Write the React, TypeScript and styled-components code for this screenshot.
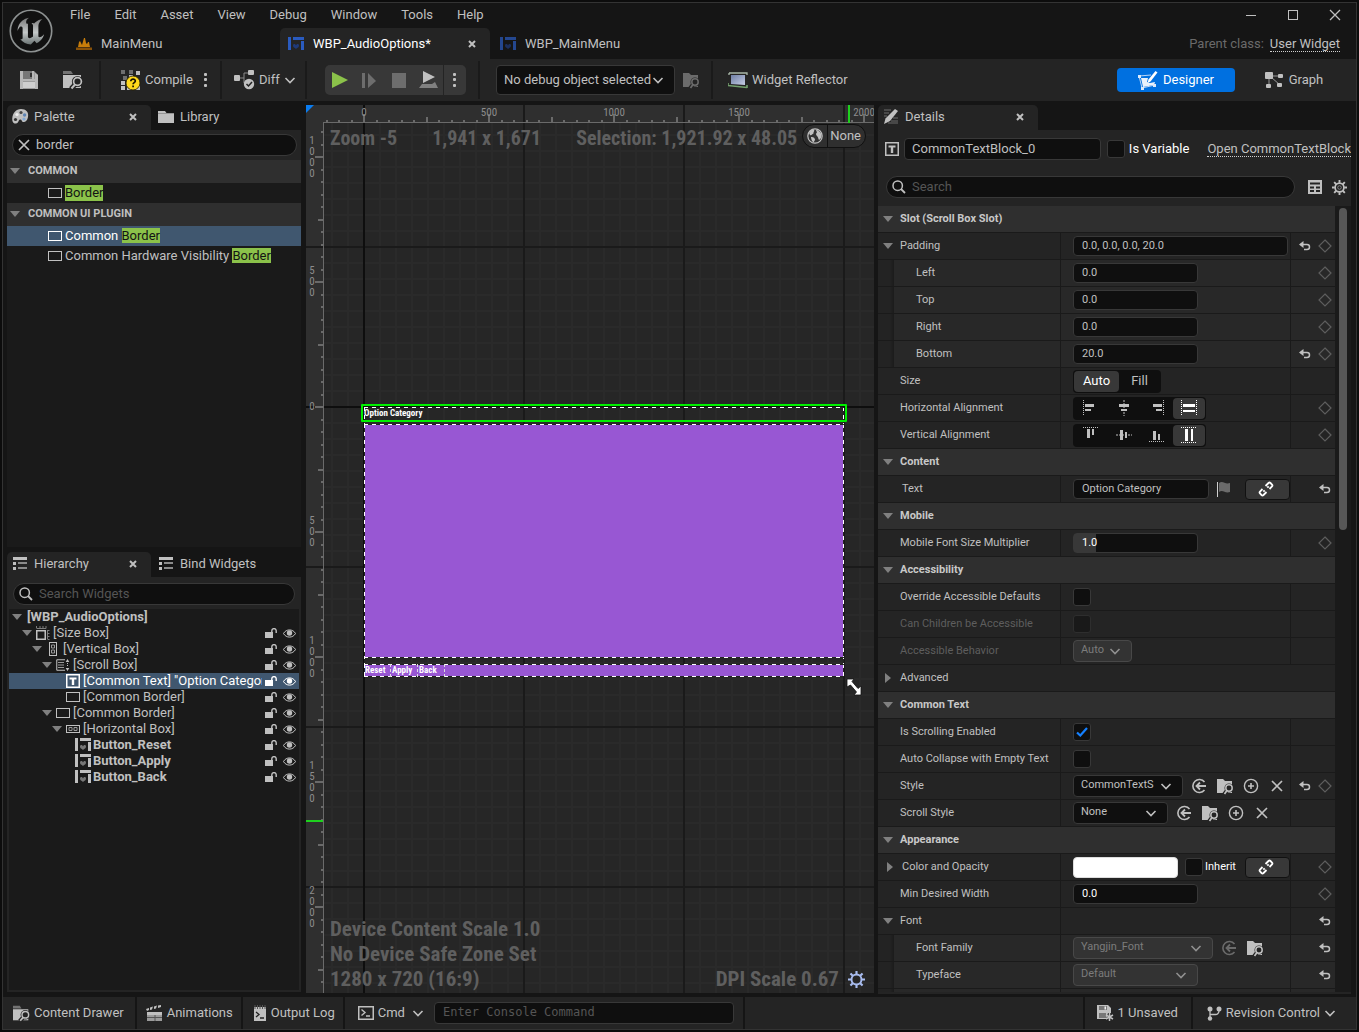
import React from "react";
import styled, { createGlobalStyle, css } from "styled-components";

const c = {
  frame: "#0c0c0c",
  recess: "#151515",
  panel: "#242424",
  well: "#1a1a1a",
  header: "#2f2f2f",
  input: "#0f0f0f",
  line: "#383838",
  text: "#c0c0c0",
  select: "#40576f",
  blue: "#0070e0",
  green: "#8bc24a",
};

const sans = `Roboto, "Noto Sans", sans-serif`;
const narrow = `"Roboto Condensed", "Liberation Sans Narrow", Roboto, sans-serif`;

const Global = createGlobalStyle`
  *, *::before, *::after { box-sizing: border-box; }
  body { margin: 0; background: ${c.frame}; color: ${c.text}; font: 13px/16px ${sans}; }
  button, input, select { font: inherit; color: inherit; margin: 0; padding: 0; border: 0; background: none; outline: none; }
  button { display: inline-flex; align-items: center; justify-content: center; white-space: nowrap; }
  svg { display: block; flex: none; }
  a { color: inherit; text-decoration: none; }
  ul { list-style: none; margin: 0; padding: 0; }
`;

/* ---------- icons ---------- */

type SvgProps = { w?: number; h?: number; box?: string; children: React.ReactNode };
const Svg = ({ w = 16, h, box, children }: SvgProps) => (
  <svg width={w} height={h ?? w} viewBox={box ?? `0 0 ${w} ${h ?? w}`} fill="currentColor" aria-hidden="true">
    {children}
  </svg>
);

const Chevron = ({ color = "currentColor" }: { color?: string }) => (
  <Svg w={12} h={10}>
    <path d="M1.5 3 6 7.5 10.500 3" fill="none" stroke={color} strokeWidth="1.6" />
  </Svg>
);
const TriDown = () => (
  <Svg w={10} h={6}><path d="M0 0h10L5 6z" fill="#808080" /></Svg>
);
const TriRight = () => (
  <Svg w={6} h={10}><path d="M0 0v10l6-5z" fill="#808080" /></Svg>
);
const Dots = () => (
  <Svg w={4} h={16}><rect x="0" y="1" width="3" height="3" rx="1" /><rect x="0" y="6" width="3" height="3" rx="1" /><rect x="0" y="12" width="3" height="3" rx="1" /></Svg>
);
const CloseX = () => (
  <Svg w={8}><path d="M1 1l6 6M7 1 1 7" stroke="currentColor" strokeWidth="2" /></Svg>
);
const BigX = () => (
  <Svg w={12}><path d="M1 1l10 10M11 1 1 11" stroke="currentColor" strokeWidth="1.7" /></Svg>
);
const Search = () => (
  <Svg w={14}><circle cx="5.700" cy="5.700" r="4.700" fill="none" stroke="currentColor" strokeWidth="1.5" /><path d="M9 9l4 4" stroke="currentColor" strokeWidth="1.8" /></Svg>
);
const SaveIcon = () => (
  <Svg w={18}>
    <path d="M0 0h14l4 4v14H0z" fill="#9c9c9c" />
    <path d="M3 0h10v8H3z" fill="#777" /><path d="M0 0h3v18H0zM15 2l3 2v14h-3zM3 8h12v2H3zM12 0h2v8h-2z" fill="#b8b8b8" />
    <path d="M10 2h2v4h-2z" fill="#333" /><path d="M3 11h12v6H3z" fill="#cfcfcf" />
  </Svg>
);
const BrowseIcon = ({ w = 20 }: { w?: number }) => (
  <Svg w={w} box="0 0 20 20">
    <path d="M0 1h8l2 3H0z" opacity=".5" />
    <path d="M0 5h18v13H0z" />
    <circle cx="14.500" cy="11.500" r="5.600" fill={c.panel} />
    <path d="M12.500 14 8 19" stroke={c.panel} strokeWidth="5" />
    <circle cx="14.500" cy="11.500" r="3.900" fill="none" stroke="currentColor" strokeWidth="1.7" />
    <path d="M12 14.500 8.500 18.500" stroke="currentColor" strokeWidth="2" />
  </Svg>
);
const FindFile = () => (
  <Svg w={17}>
    <path d="M0 1h6l2 2h7v12H0z" />
    <circle cx="12" cy="10" r="4.500" fill={c.panel} />
    <path d="M10 12.500 7 16.500" stroke={c.panel} strokeWidth="4" />
    <circle cx="12" cy="10" r="3.200" fill="none" stroke="currentColor" strokeWidth="1.500" />
    <path d="M10 12.500l-2.500 3.500" stroke="currentColor" strokeWidth="1.700" />
  </Svg>
);
const CompileIcon = () => (
  <Svg w={21}>
    <g fill="#6e6e6e"><path d="M1 0h4v4H1zM9 0h4v4H9zM3 6h4v4H3z" /></g>
    <path d="M16 1h4v4h-4zM9 5h4v4H9zM1 11h4v4H1zM1 16h4v4H1zM7 16h4v4H7zM16 16h4v4h-4z" />
    <circle cx="13" cy="13" r="7" fill="#ffd91c" stroke="#241f00" strokeWidth=".8" />
    <path d="M10.800 11.200c0-3 4.600-2.700 4.500-.1 0 1.600-2.200 1.500-2.200 3.100M13.100 15.600v1.700" fill="none" stroke="#1a1500" strokeWidth="1.700" />
  </Svg>
);
const DiffIcon = () => (
  <Svg w={21} h={20}>
    <rect x="0" y="5" width="6" height="6" rx="1" /><rect x="14" y="0" width="6" height="5" rx="1" />
    <path d="M6 8h4M10 8V3h4M10 8v5h2" fill="none" stroke="#8a8a8a" />
    <circle cx="15" cy="14" r="5.200" /><path d="M12.500 14l2 2 3.500-4" fill="none" stroke="#222" strokeWidth="1.500" />
  </Svg>
);
const WidgetBp = ({ color, heart }: { color: string; heart: string }) => (
  <Svg w={16} h={14}>
    <path d="M0 0h3v13H0zM5 0h11v3H5zM13 4h3v9h-3z" fill={color} />
    <path d="M5 8.500c0-2 2.500-2 3 0 .5-2 3-2 3 0s-1.500 2-3 3.500c-1.500-1.500-3-1.500-3-3.500z" fill={heart} />
  </Svg>
);
const LevelIcon = () => (
  <Svg w={16} h={13}>
    <path d="M2 10l1-5 1-1 2 4 2-7 1 0 1 5 1 1 1-2 1 0 1 5z" fill="#c77d0a" /><path d="M0 10.500h16V13H0z" fill="#8a5208" />
  </Svg>
);
const ReflectorIcon = () => (
  <Svg w={20} h={17}>
    <defs><linearGradient id="refl" x1="0" y1="0" x2="1" y2="1"><stop offset="0" stopColor="#6f7fa6" /><stop offset="1" stopColor="#c5cce4" /></linearGradient></defs>
    <path d="M3 3h14v10l-14-1z" fill="url(#refl)" />
    <path d="M1 1h18v2M1 1v2" fill="none" stroke="#a9b7a8" strokeWidth="1.300" />
    <path d="M0 13.500 19 15.500M0 13v-2M19 16v-3" fill="none" stroke="#73a06d" strokeWidth="1.600" />
  </Svg>
);
const DesignerIcon = () => (
  <Svg w={20} h={19}>
    <path d="M3 7h7l-1 4 3 1 5-1-1 3-11 2z" fill="#e9f1fb" /><path d="M1 5l12-1M1 5l3 12M4 17l13-3" stroke="#bcd6f5" fill="none" />
    <path d="M0 4h3v3H0zM3 16h3v3H3zM15 13h3v3h-3z" fill="#dbe9fa" />
    <path d="M17.500 0l2 1.500-7 9-3 1.500 1-3.500z" fill="#fff" />
  </Svg>
);
const GraphIcon = () => (
  <Svg w={19} h={17}>
    <path d="M4 5v9M6 5l9 8M7 4h7" stroke="#9a9a9a" fill="none" />
    <rect x="0" y="0" width="8" height="7" rx="1" /><rect x="13" y="2" width="5" height="4" rx="1" />
    <rect x="1" y="12" width="5" height="4" rx="1" /><rect x="12" y="11" width="5" height="4" rx="1" />
  </Svg>
);
const PaletteIcon = () => (
  <Svg w={17} h={15}>
    <path d="M9 0c5 0 8 3 7 8-.6 4-3 5.500-5 5-1.600-.5-1-2.700-3-2.500-1.700.2-1 3.500-4 4C1 15 0 12 .3 9 .8 4 4 0 9 0z" />
    <g fill="#333"><circle cx="3.500" cy="10.500" r="1.600" /></g>
    <circle cx="5" cy="5.500" r="1.600" fill="#eee" /><circle cx="9" cy="3.500" r="1.600" fill="#444" /><circle cx="12.600" cy="6" r="1.700" fill="#5d84b5" /><circle cx="12" cy="10" r="1.600" fill="#83a9d6" />
  </Svg>
);
const FolderIcon = () => (
  <Svg w={16} h={12}><path d="M0 0h7l1.500 2H16v10H0z" /><path d="M0 2.500h16" stroke="#777" strokeWidth=".6" /></Svg>
);
const ListIcon = () => (
  <Svg w={14} h={13}><path d="M0 0h14v3H0zM0 5h3v3H0zM0 10h3v3H0z" /><path d="M5 5h9v2H5zM5 10h9v2H5z" fill="#8b8b8b" /></Svg>
);
const DetailsIcon = () => (
  <Svg w={16} h={15}>
    <path d="M1 1h7M1 4h5M1 7h3M10 9h5M8 12h7M5 14h10" stroke="#6d6d6d" />
    <path d="M12 0l3 2-8 10-6 3 1.500-5.500z" />
  </Svg>
);
const TextIcon = () => (
  <Svg w={14}><rect x=".75" y=".75" width="12.500" height="12.500" fill="none" stroke="currentColor" strokeWidth="1.500" /><path d="M3.500 3.500h7v2h-2.300V11H5.800V5.500H3.500z" /></Svg>
);
const BorderIcon = () => (
  <Svg w={14} h={10}><rect x=".5" y=".5" width="13" height="9" fill="none" stroke="currentColor" /></Svg>
);
const SizeBoxIcon = () => (
  <Svg w={14}><rect x=".75" y="4.750" width="8.500" height="8.500" fill="none" stroke="currentColor" strokeWidth="1.500" /><path d="M.5 0v2.500M4 0v2.500M7 0v2.500M10 0v2.500M1 2.500h9M11.500 4.500h2M11.500 7.500h2M11.500 10.500h2M11.500 13.500h2M11.500 4v9" stroke="#7d7d7d" fill="none" /></Svg>
);
const VBoxIcon = () => (
  <Svg w={8} h={14}><rect x=".5" y=".5" width="7" height="13" fill="none" stroke="currentColor" /><path d="M2.500 3h3v3h-3zM2.500 8h3v3h-3z" fill="none" stroke="#999" /></Svg>
);
const HBoxIcon = () => (
  <Svg w={14} h={8}><rect x=".5" y=".5" width="13" height="7" fill="none" stroke="currentColor" /><path d="M3 2.500h3v3H3zM8 2.500h3v3H8z" fill="none" stroke="#999" /></Svg>
);
const ScrollBoxIcon = () => (
  <Svg w={14} h={12}><path d="M9 .75H.75v10.500H9" fill="none" stroke="currentColor" /><path d="M2 3.500h6M2 6h6M2 8.500h6" stroke="#999" /><path d="M11.500 0l1.800 3H9.700zM11.500 12l1.800-3H9.700zM11 4h1v1h-1zM11 6h1v1h-1z" /></Svg>
);
const LockIcon = () => (
  <Svg w={12} h={10}><path d="M0 4h8v6H0z" /><path d="M6.800 5V2.800a2.200 2.200 0 0 1 4.400 0V5" fill="none" stroke="currentColor" strokeWidth="1.400" /></Svg>
);
const EyeIcon = () => (
  <Svg w={13} h={9}><path d="M.5 4.500C3-.3 10-.3 12.500 4.500 10 9.300 3 9.300.5 4.500z" fill="none" stroke="currentColor" /><circle cx="6.500" cy="4" r="2.700" /></Svg>
);
const ResetIcon = () => (
  <Svg w={12} h={10}><path d="M1.500 3.500h6.500a2.500 2.500 0 0 1 0 5H5" fill="none" stroke="currentColor" strokeWidth="1.500" /><path d="M4.500 0v7L0 3.500z" /></Svg>
);
const Diamond = () => (
  <Svg w={14}><path d="M7 1l6 6-6 6-6-6z" fill="none" stroke="#5e5e5e" strokeWidth="1.200" /></Svg>
);
const UseIcon = () => (
  <Svg w={16}><path d="M13.500 4A6.500 6.500 0 1 0 13.500 12" fill="none" stroke="currentColor" strokeWidth="1.600" /><path d="M15 8H5.500M9 4.500 5.500 8l3.500 3.500" fill="none" stroke="currentColor" strokeWidth="1.800" /></Svg>
);
const PlusIcon = () => (
  <Svg w={16}><circle cx="8" cy="8" r="6.600" fill="none" stroke="currentColor" strokeWidth="1.400" /><path d="M8 5v6M5 8h6" stroke="currentColor" strokeWidth="1.600" /></Svg>
);
const LinkIcon = () => (
  <Svg w={16}><g fill="none" stroke="#fff" strokeWidth="1.800"><path d="M7.500 5 10.500 2a1.500 1.500 0 0 1 2 0l1.500 1.500a1.500 1.500 0 0 1 0 2L11.500 8M8.500 11 5.500 14a1.500 1.500 0 0 1-2 0L2 12.500a1.500 1.500 0 0 1 0-2L4.500 8M9.300 6.700l1.400-1.400M5.300 10.700l1.400-1.400" /></g></Svg>
);
const FlagIcon = () => (
  <Svg w={14} h={16}><path d="M.5 1v15" stroke="#d0d0d0" /><path d="M2 2c4-3 6 2 11 0v9c-5 2-7-3-11 0z" fill="#6b6b6b" /></Svg>
);
const TableIcon = () => (
  <Svg w={14}><path d="M0 0h14v14H0z" /><path d="M2 3.500h10M2 7.500h4M8 7.500h4M2 11h4M8 11h4" stroke="#242424" strokeWidth="2" /></Svg>
);
const Gear = ({ w = 15, color = c.text, core = true }: { w?: number; color?: string; core?: boolean }) => (
  <Svg w={w} box="0 0 16 16">
    <path d="M8 0v3M8 13v3M0 8h3M13 8h3M2.300 2.300l2.200 2.200M11.500 11.500l2.200 2.200M13.700 2.300l-2.200 2.200M4.500 11.500l-2.200 2.200" stroke={color} strokeWidth="2" />
    <circle cx="8" cy="8" r="4.700" fill="none" stroke={color} strokeWidth="1.800" />
    {core && <circle cx="8" cy="8" r="1.900" fill="none" stroke={color} strokeWidth="1" opacity=".6" />}
  </Svg>
);
const Globe = () => (
  <Svg w={16}><circle cx="8" cy="8" r="7.200" fill="#333" stroke="#c0c0c0" strokeWidth="1.200" /><path d="M2 5c1-3 4-4 5-3.500C8 3 6 4 6.500 5.500 5 6 4.500 8 3 7zM9 2c2 0 5 2 5.500 5 0 3-1 4-2.500 5-1-1-.5-3-2-4S9 5 10 4.500zM4 9c2-.5 4 1 4 2.500 0 1-1 2-1.500 3C5 13.500 4 11 4 9z" /></Svg>
);
const Logo = () => (
  <Svg w={44} box="0 0 24 24">
    <defs><linearGradient id="steel" x1="0" y1="0" x2="0" y2="1"><stop offset="0" stopColor="#777" /><stop offset=".55" stopColor="#c4c8c8" /><stop offset="1" stopColor="#6a7373" /></linearGradient></defs>
    <circle cx="12" cy="12" r="11.300" fill="#111" stroke="#8d9191" strokeWidth=".9" />
    <path fill="url(#steel)" d="M19.130 13.729c-.206.997-1.126 3.557-4.060 4.942l-1.179-1.325-1.988 2a7.338 7.338 0 0 1-5.804-2.978 2.859 2.859 0 0 0 .65.123c.326.006.678-.114.678-.66v-5.394a.89.89 0 0 0-1.116-.89c-.92.212-1.656 2.509-1.656 2.509a7.304 7.304 0 0 1 2.528-5.597 7.408 7.408 0 0 1 3.730-1.721c-1.006.573-1.570 1.507-1.570 2.290 0 1.262.76 1.109.984.923v7.280a1.157 1.157 0 0 0 .148.256 1.075 1.075 0 0 0 .88.445c.76 0 1.747-.868 1.747-.868V9.172c0-.6-.452-1.324-.905-1.572 0 0 .838-.149 1.484.346a5.537 5.537 0 0 1 .387-.425c1.508-1.480 2.929-1.902 4.112-2.112 0 0-2.151 1.690-2.151 3.960 0 1.687.043 5.801.043 5.801.799.771 1.986-.342 3.059-1.441z" />
  </Svg>
);
const ClapIcon = () => (
  <Svg w={17} h={16}><path d="M1 7h15v9H1z" fill="#9b9b9b" /><path d="M1 7h15v3H1z" /><path d="M9 10v6M1 12.500h15" stroke="#555" /><path d="M0 4l3-1v2L1 6zM4 2.500l3-1-1 3-2 .5zM8 1.500l3-1-1 3-2 .5zM12 .5 15 0v2l-3 1z" /></Svg>
);
const LogIcon = () => (
  <Svg w={14} h={16}><path d="M1 2h12v14H1z" /><path d="M2 0v4M4.500 0v4M7 0v4M9.500 0v4M12 0v4" stroke="#555" /><path d="M3 7l3 2.500L3 12M7 13h4" fill="none" stroke="#222" strokeWidth="1.300" /></Svg>
);
const CmdIcon = () => (
  <Svg w={16} h={14}><rect x=".75" y=".75" width="14.500" height="12.500" fill="none" stroke="currentColor" strokeWidth="1.500" /><path d="M3.500 3.500 7 6.500l-3.500 3M8 10h4" fill="none" stroke="currentColor" strokeWidth="1.400" /></Svg>
);
const UnsavedIcon = () => (
  <Svg w={17} h={16}><path d="M0 0h11l3 3v5h-3l-2 6H0z" /><path d="M2 1h8v4H2zM2 8h7v5H2z" fill="#777" /><path d="M7.500 1.500h1.500v3H7.500z" fill="#eee" /><path d="M12.500 8v8M9 10l7 4M16 10l-7 4" stroke="currentColor" strokeWidth="1.500" /></Svg>
);
const BranchIcon = () => (
  <Svg w={15} h={15}><circle cx="3" cy="3" r="2.500" /><circle cx="3" cy="12.500" r="2.200" /><circle cx="12" cy="3" r="2.500" /><path d="M3 3v9M3 8.500h5.500a3.500 3.500 0 0 0 3.500-3.500V3" fill="none" stroke="currentColor" strokeWidth="1.300" /></Svg>
);
const AlignIcon = ({ kind, turn }: { kind: number; turn?: boolean }) => (
  <Svg w={16}>
    <g transform={turn ? "matrix(0 1 1 0 0 0)" : undefined}>
      {kind === 0 && <><path d="M.5 0v16" stroke="currentColor" strokeDasharray="1 1" /><path d="M2 4h9v3H2zM2 9h6v2H2z" /></>}
      {kind === 1 && <><path d="M8 0v16" stroke="currentColor" strokeDasharray="2 1" /><path d="M3 4h10v3H3zM5 9h6v2H5z" /></>}
      {kind === 2 && <><path d="M14.500 0v16" stroke="currentColor" strokeDasharray="1 1" /><path d="M4 4h9v3H4zM7 9h6v2H7z" /></>}
      {kind === 3 && <><path d="M.5 0v16M15.500 0v16" stroke="currentColor" strokeDasharray="1 1" /><path d="M2 4h12v3H2zM2 10h12v2H2z" /></>}
    </g>
  </Svg>
);

/* ---------- window chrome ---------- */

const Window = styled.div`
  height: 100vh;
  padding: 2px;
  display: flex;
`;
const Frame = styled.div`
  flex: 1;
  min-width: 0;
  display: flex;
  flex-direction: column;
  border: 1px solid #333;
  background: ${c.recess};
`;
const TitleBar = styled.header`
  display: grid;
  grid-template-columns: 55px minmax(0, 1fr) auto;
  height: 56px;
`;
const LogoSlot = styled.div`
  display: grid;
  place-items: center;
`;
const TitleMain = styled.div`
  display: grid;
  grid-template-rows: 25px 31px;
`;
const MenuBar = styled.nav`
  display: flex;
  align-items: center;
  padding-bottom: 2px;
`;
const MenuItem = styled.button`
  height: 22px;
  padding: 0 12px;
`;
const DocTabs = styled.div`
  display: flex;
  gap: 2px;
  padding-left: 10px;
`;
const DocTab = styled.div<{ $active?: boolean }>`
  width: 210px;
  display: flex;
  align-items: center;
  gap: 9px;
  padding: 0 14px 0 8px;
  border-radius: 5px 5px 0 0;
  background: ${(p) => (p.$active ? c.panel : "transparent")};
  color: ${(p) => (p.$active ? "#fff" : c.text)};
`;
const TabLabel = styled.button`
  flex: 1;
  justify-content: flex-start;
`;
const CloseButton = styled.button`
  color: ${c.text};
`;
const TitleSide = styled.div`
  display: grid;
  grid-template-rows: 25px 31px;
  justify-items: end;
`;
const WindowButtons = styled.div`
  display: flex;
`;
const WindowButton = styled.button`
  width: 42px;
  height: 24px;
`;
const ParentClass = styled.div`
  display: flex;
  align-items: center;
  gap: 6px;
  padding-right: 16px;
  color: #6a6a6a;
`;
const DottedLink = styled.a`
  color: ${c.text};
  border-bottom: 1px dotted #d0d0d0;
  line-height: 15px;
  white-space: nowrap;
`;

const ToolBar = styled.div`
  display: flex;
  height: 42px;
  padding: 0 3px 0 0;
  background: ${c.panel};
`;
const ToolGroup = styled.div<{ $w?: number; $pad: number; $gap?: number }>`
  display: flex;
  align-items: center;
  gap: ${(p) => p.$gap ?? 0}px;
  width: ${(p) => (p.$w ? p.$w + "px" : "auto")};
  padding-left: ${(p) => p.$pad}px;
  border-right: ${(p) => (p.$w ? "2px solid #1a1a1a" : "0")};
  margin: 2px 0;
`;
const ToolButton = styled.button<{ $faded?: boolean }>`
  gap: 4px;
  min-height: 30px;
  color: ${(p) => (p.$faded ? "#6b6b6b" : c.text)};
`;
const PlayGroup = styled.div`
  display: flex;
  width: 141px;
  height: 30px;
  border-radius: 5px;
  background: ${c.line};
`;
const PlayButton = styled.button<{ $color?: string }>`
  flex: 1;
  color: ${(p) => p.$color ?? "#6d6d6d"};
`;
const PlayMore = styled.button`
  width: 23px;
  border-left: 1px solid ${c.panel};
`;
const ModeSwitch = styled.div`
  margin-left: auto;
  display: flex;
  align-items: center;
`;
const ModeButton = styled.button<{ $active?: boolean }>`
  width: 118px;
  height: 24px;
  gap: 5px;
  border-radius: 4px;
  background: ${(p) => (p.$active ? c.blue : "transparent")};
  color: ${(p) => (p.$active ? "#fff" : c.text)};
`;

/* ---------- shared controls ---------- */

const SelectWrap = styled.span<{ $w: number; $tall?: boolean; $off?: boolean }>`
  position: relative;
  display: inline-flex;
  align-items: center;
  width: ${(p) => p.$w}px;
  height: ${(p) => (p.$tall ? 30 : 22)}px;
  color: ${(p) => (p.$off ? "#7c7c7c" : c.text)};
  select {
    appearance: none;
    width: 100%;
    height: 100%;
    padding: ${(p) => (p.$tall ? "0 22px 0 7px" : "0 22px 2px 7px")};
    border: 1px solid ${(p) => (p.$off ? "#484848" : c.line)};
    border-radius: 4px;
    background: ${(p) => (p.$off ? "#333" : c.input)};
    opacity: 1;
  }
  svg {
    position: absolute;
    right: 11px;
    pointer-events: none;
  }
`;
type PickProps = { label: string; value: string; w: number; tall?: boolean; off?: boolean };
const Pick = ({ label, value, w, tall, off }: PickProps) => (
  <SelectWrap $w={w} $tall={tall} $off={off}>
    <select aria-label={label} disabled={off}><option>{value}</option></select>
    <Chevron color={off ? "#909090" : undefined} />
  </SelectWrap>
);

const CheckWrap = styled.span<{ $off?: boolean }>`
  display: inline-grid;
  place-items: center;
  opacity: ${(p) => (p.$off ? 0.5 : 1)};
  > * { grid-area: 1 / 1; }
  input {
    appearance: none;
    width: 18px;
    height: 18px;
    border: 1px solid ${c.line};
    border-radius: 3px;
    background: ${c.input};
  }
  svg { pointer-events: none; }
`;
type CheckProps = { id?: string; label?: string; on?: boolean; off?: boolean };
const Check = ({ id, label, on, off }: CheckProps) => (
  <CheckWrap $off={off}>
    <input type="checkbox" id={id} aria-label={label} defaultChecked={on} disabled={off} />
    {on && <Svg w={12} h={10}><path d="M1 5.500 4.300 8.500 11 1" fill="none" stroke="#1480ff" strokeWidth="2.200" /></Svg>}
  </CheckWrap>
);

const SearchBox = styled.label`
  display: flex;
  align-items: center;
  gap: 6px;
  height: 22px;
  padding: 0 5px;
  border: 1px solid ${c.line};
  border-radius: 11px;
  background: ${c.input};
  input { flex: 1; min-width: 0; height: 20px; padding-bottom: 2px; }
  input::placeholder { color: #555; opacity: 1; }
`;

const PanelTabs = styled.div`
  display: flex;
  height: 25px;
`;
const PanelTab = styled.div<{ $w: number; $active?: boolean }>`
  width: ${(p) => p.$w}px;
  display: flex;
  align-items: center;
  gap: 7px;
  padding: 0 14px 2px ${(p) => (p.$active ? 5 : 7)}px;
  border-radius: 5px 5px 0 0;
  background: ${(p) => (p.$active ? c.panel : "transparent")};
`;
const TabIcon = styled.span`
  width: 15px;
  display: grid;
  justify-items: center;
`;

/* ---------- left column ---------- */

const Main = styled.main`
  flex: 1;
  min-height: 0;
  display: grid;
  grid-template-columns: 294px minmax(0, 1fr) 473px;
  padding: 4px 5px 3px 4px;
`;
const LeftColumn = styled.div`
  display: grid;
  grid-template-rows: minmax(0, 442fr) minmax(0, 440fr);
  gap: 5px;
  min-height: 0;
  padding-bottom: 2px;
`;
const Panel = styled.section`
  display: flex;
  flex-direction: column;
  min-height: 0;
  min-width: 0;
`;
const PanelBody = styled.div<{ $pad?: string }>`
  flex: 1;
  min-height: 0;
  display: flex;
  flex-direction: column;
  background: ${c.panel};
  padding: ${(p) => p.$pad ?? "0"};
`;
const SearchRow = styled.div<{ $pad: string }>`
  padding: ${(p) => p.$pad};
`;
const ListWell = styled.div`
  flex: 1;
  min-height: 0;
  background: ${c.well};
  overflow: hidden;
`;
const Category = styled.button`
  display: flex;
  justify-content: flex-start;
  width: 100%;
  height: 23px;
  gap: 8px;
  padding: 0 0 2px 3px;
  background: ${c.header};
  font-size: 11px;
  font-weight: 700;
`;
const PaletteItem = styled.button<{ $selected?: boolean }>`
  width: 100%;
  height: 20px;
  justify-content: flex-start;
  gap: 3px;
  padding-left: 41px;
  background: ${(p) => (p.$selected ? c.select : "transparent")};
  color: ${(p) => (p.$selected ? "#fff" : c.text)};
`;
const Mark = styled.mark`
  background: ${c.green};
  color: #141414;
`;
const ItemText = styled.span`
  white-space: pre;
`;

const TreeRow = styled.li<{ $level: number; $selected?: boolean; $bold?: boolean }>`
  display: flex;
  align-items: center;
  height: 16px;
  padding-left: ${(p) => 3 + p.$level * 10}px;
  background: ${(p) => (p.$selected ? c.select : "transparent")};
  color: ${(p) => (p.$selected ? "#fff" : c.text)};
  font-weight: ${(p) => (p.$bold ? 700 : 400)};
`;
const TreeToggle = styled.span`
  width: 10px;
  flex: none;
`;
const TreeIcon = styled.span<{ $root?: boolean }>`
  width: ${(p) => (p.$root ? 5 : 21)}px;
  flex: none;
  display: grid;
  place-items: center;
`;
const TreeText = styled.span`
  flex: 1;
  min-width: 0;
  overflow: hidden;
  white-space: nowrap;
`;
const TreeAction = styled.button`
  width: 18px;
  height: 16px;
  flex: none;
`;
const TreeTail = styled.span`
  display: flex;
  padding-right: 1px;
`;

const buttonIcon = <WidgetBp color="#c0c0c0" heart="#777" />;
const tree = [
  { level: 0, name: "[WBP_AudioOptions]", open: true, bold: true, root: true },
  { level: 1, name: "[Size Box]", open: true, icon: <SizeBoxIcon /> },
  { level: 2, name: "[Vertical Box]", open: true, icon: <VBoxIcon /> },
  { level: 3, name: "[Scroll Box]", open: true, icon: <ScrollBoxIcon /> },
  { level: 4, name: '[Common Text] "Option Category"', icon: <TextIcon />, selected: true },
  { level: 4, name: "[Common Border]", icon: <BorderIcon /> },
  { level: 3, name: "[Common Border]", open: true, icon: <BorderIcon /> },
  { level: 4, name: "[Horizontal Box]", open: true, icon: <HBoxIcon /> },
  { level: 5, name: "Button_Reset", icon: buttonIcon, bold: true },
  { level: 5, name: "Button_Apply", icon: buttonIcon, bold: true },
  { level: 5, name: "Button_Back", icon: buttonIcon, bold: true },
];

const PalettePanel = () => (
  <Panel>
    <PanelTabs>
      <PanelTab $w={144} $active>
        <TabIcon><PaletteIcon /></TabIcon>
        <TabLabel>Palette</TabLabel>
        <CloseButton aria-label="Close Palette"><CloseX /></CloseButton>
      </PanelTab>
      <PanelTab $w={144}>
        <TabIcon><FolderIcon /></TabIcon>
        <TabLabel>Library</TabLabel>
      </PanelTab>
    </PanelTabs>
    <PanelBody>
      <SearchRow $pad="4px 4px 4px 5px">
        <SearchBox>
          <BigX />
          <input aria-label="Search palette" defaultValue="border" />
        </SearchBox>
      </SearchRow>
      <ListWell>
        <Category><TriDown />COMMON</Category>
        <PaletteItem><BorderIcon /><Mark>Border</Mark></PaletteItem>
        <Category><TriDown />COMMON UI PLUGIN</Category>
        <PaletteItem $selected><BorderIcon /><ItemText>Common <Mark>Border</Mark></ItemText></PaletteItem>
        <PaletteItem><BorderIcon /><ItemText>Common Hardware Visibility <Mark>Border</Mark></ItemText></PaletteItem>
      </ListWell>
    </PanelBody>
  </Panel>
);

const HierarchyPanel = () => (
  <Panel>
    <PanelTabs>
      <PanelTab $w={144} $active>
        <TabIcon><ListIcon /></TabIcon>
        <TabLabel>Hierarchy</TabLabel>
        <CloseButton aria-label="Close Hierarchy"><CloseX /></CloseButton>
      </PanelTab>
      <PanelTab $w={144}>
        <TabIcon><ListIcon /></TabIcon>
        <TabLabel>Bind Widgets</TabLabel>
      </PanelTab>
    </PanelTabs>
    <PanelBody $pad="0 2px 2px">
      <SearchRow $pad="6px 4px 4px">
        <SearchBox>
          <Search />
          <input aria-label="Search widgets" placeholder="Search Widgets" />
        </SearchBox>
      </SearchRow>
      <ListWell>
        <ul>
          {tree.map((n, i) => (
            <TreeRow key={i} $level={n.level} $selected={n.selected} $bold={n.bold}>
              <TreeToggle>{n.open && <TriDown />}</TreeToggle>
              <TreeIcon $root={n.root}>{n.icon}</TreeIcon>
              <TreeText>{n.name}</TreeText>
              {!n.root && (
                <TreeTail>
                  <TreeAction aria-label={"Lock " + n.name}><LockIcon /></TreeAction>
                  <TreeAction aria-label={"Show " + n.name}><EyeIcon /></TreeAction>
                </TreeTail>
              )}
            </TreeRow>
          ))}
        </ul>
      </ListWell>
    </PanelBody>
  </Panel>
);

/* ---------- designer canvas ---------- */

const Designer = styled.section`
  display: grid;
  grid-template: 18px minmax(0, 1fr) / 18px minmax(0, 1fr);
  margin: 0 4px 1px 5px;
  min-height: 0;
  overflow: hidden;
`;
const TopRuler = styled.div`
  grid-column: 1 / -1;
  overflow: hidden;
  background: ${c.header};
`;
const SideRuler = styled.div`
  min-height: 0;
  overflow: hidden;
  background: ${c.header};
`;
const RulerText = styled.text`
  font: 11px ${narrow};
  fill: #8c8c8c;
  text-anchor: middle;
`;
const line = (dir: string, col: string, w = 2) =>
  `linear-gradient(${dir}, ${col} ${w}px, transparent ${w}px)`;
const Canvas = styled.div`
  position: relative;
  overflow: hidden;
  min-height: 0;
  background-color: #262626;
  background-image: ${line("90deg", "#0e0e0e")}, ${line("180deg", "#0e0e0e")},
    ${line("90deg", "#1a1a1a")}, ${line("180deg", "#1a1a1a")},
    ${line("90deg", "#2a2a2a")}, ${line("180deg", "#2a2a2a")};
  background-size: 100% 100%, 100% 100%, 160px 160px, 160px 160px, 16px 16px, 16px 16px;
  background-position: 39px 0, 0 283px, 39px 123px, 39px 123px, 7px 11px, 7px 11px;
  background-repeat: no-repeat, no-repeat, repeat, repeat, repeat, repeat;
`;
const dashes = css`
  background-image: repeating-linear-gradient(90deg, #fff 0 4px, #222 4px 8px),
    repeating-linear-gradient(90deg, #fff 0 4px, #222 4px 8px),
    repeating-linear-gradient(180deg, #fff 0 4px, #222 4px 8px),
    repeating-linear-gradient(180deg, #fff 0 4px, #222 4px 8px);
  background-size: 100% 1px, 100% 1px, 1px 100%, 1px 100%;
  background-position: top, bottom, left, right;
  background-repeat: no-repeat;
`;
const Surface = styled.div`
  position: absolute;
  left: 40px;
  top: 284px;
  width: 480px;
  height: 270px;
  display: flex;
  flex-direction: column;
  color: #fff;
  font: 700 9px/13px ${narrow};
  ${dashes}
`;
const TextBlock = styled.div`
  height: 17px;
`;
const Fill = styled.div`
  flex: 1;
  background-color: #9857d3;
  ${dashes}
`;
const ButtonBar = styled.div`
  display: flex;
  height: 13px;
  margin-top: 6px;
  background-color: #9857d3;
  ${dashes}
`;
const PreviewButton = styled.span`
  width: 27px;
  border-right: 1px dashed #ddd;
  padding-left: 1px;
`;
const Outline = styled.div`
  position: absolute;
  left: 37px;
  top: 281px;
  width: 486px;
  height: 18px;
  border: 2px solid #00f000;
  border-radius: 1px;
`;
const Overlay = styled.div`
  position: absolute;
  inset: 0;
  display: flex;
  flex-direction: column;
  justify-content: space-between;
  padding: 1px 8px 1px 6px;
  color: #5f5f5f;
  font: 700 21px/25px ${narrow};
`;
const OverlayRow = styled.div`
  display: flex;
  justify-content: space-between;
  align-items: flex-end;
`;
const TopInfo = styled.div`
  flex: 1;
  display: flex;
  justify-content: space-between;
  padding: 2px 5px 0 0;
  font-size: 20px;
  white-space: nowrap;
`;
const LocalePill = styled.button`
  height: 24px;
  align-self: flex-start;
  border: 1px solid #101010;
  border-radius: 12px;
  background: #2f2f2f;
  color: ${c.text};
  font: 13px/16px ${sans};
  padding-left: 4px;
  span { border-left: 1px solid #101010; margin-left: 4px; padding: 3px 4px 3px 2px; }
`;
const DpiInfo = styled.div`
  display: flex;
  align-items: center;
  gap: 9px;
  padding-right: 1px;
`;
const Cursor = styled.div`
  position: absolute;
  left: 522px;
  top: 555px;
`;

const tickLength = (i: number) => (i % 10 === 0 ? 8 : i % 5 === 0 ? 5 : 2);
const ticks = Array.from({ length: 241 }, (_, i) => i - 40);
const marks = Array.from({ length: 24 }, (_, i) => i - 4);

const DesignerPanel = () => (
  <Designer>
    <TopRuler>
      <svg width="100%" height="18" aria-label="Horizontal ruler">
        {marks.map((m) => <rect key={m} x={57 + m * 160} y="0" width="2" height="18" fill={m ? "#1a1a1a" : "#0e0e0e"} />)}
        <rect x="17" y="17" width="100%" height="1" fill="#6a6a6a" />
        {ticks.filter((i) => i > -4).map((i) => (
          <rect key={i} x={Math.round(57 + i * 12.5)} y={17 - tickLength(i)} width="2" height={tickLength(i)} fill="#6a6a6a" />
        ))}
        {[0, 500, 1000, 1500, 2000].map((n) => <RulerText key={n} x={58 + n / 4} y="11">{n}</RulerText>)}
        <rect x="542" y="0" width="2" height="18" fill="#1ed01e" />
        <path d="M0 0h8L0 8z" fill="#0a7cf0" />
      </svg>
    </TopRuler>
    <SideRuler>
      <svg width="18" height="100%" aria-label="Vertical ruler">
        {marks.map((m) => <rect key={m} x="0" y={283 + m * 160} width="18" height="2" fill={m ? "#1a1a1a" : "#0e0e0e"} />)}
        <rect x="17" y="0" width="1" height="100%" fill="#6a6a6a" />
        {ticks.map((i) => (
          <rect key={i} x={17 - tickLength(i)} y={Math.round(283 + i * 12.5)} width={tickLength(i)} height="2" fill="#6a6a6a" />
        ))}
        {[-1000, -500, 0, 500, 1000, 1500, 2000].map((n) => {
          const digits = String(Math.abs(n)).split("");
          const first = 287 + n / 4 - ((digits.length - 1) * 11) / 2;
          return digits.map((d, k) => <RulerText key={n + "-" + k} x="6" y={Math.round(first + k * 11)}>{d}</RulerText>);
        })}
        <rect x="0" y="697" width="17" height="2" fill="#1ed01e" />
      </svg>
    </SideRuler>
    <Canvas>
      <Surface>
        <TextBlock>Option Category</TextBlock>
        <Fill />
        <ButtonBar>
          <PreviewButton>Reset</PreviewButton>
          <PreviewButton>Apply</PreviewButton>
          <PreviewButton>Back</PreviewButton>
        </ButtonBar>
      </Surface>
      <Outline />
      <Overlay>
        <OverlayRow>
          <TopInfo><span>Zoom -5</span><span>1,941 x 1,671</span><span>Selection: 1,921.92 x 48.05</span></TopInfo>
          <LocalePill><Globe /><span>None</span></LocalePill>
        </OverlayRow>
        <OverlayRow>
          <div>
            <div>Device Content Scale 1.0</div>
            <div>No Device Safe Zone Set</div>
            <div>1280 x 720 (16:9)</div>
          </div>
          <DpiInfo>DPI Scale 0.67<Gear w={17} color="#a9bdf0" core={false} /></DpiInfo>
        </OverlayRow>
      </Overlay>
      <Cursor>
        <Svg w={18} h={18}>
          <path d="M1 1h7L6 3.500l6 7L15 8v9H8l2.500-3-6-7L1 9z" fill="#fff" stroke="#111" strokeWidth=".8" />
        </Svg>
      </Cursor>
    </Canvas>
  </Designer>
);

/* ---------- details ---------- */

const NameRow = styled.div`
  display: flex;
  align-items: center;
  height: 22px;
  margin: 8px 0 16px 7px;
  overflow: hidden;
`;
const NameInput = styled.input`
  && {
    width: 199px;
    height: 22px;
    margin: 0 6px 0 5px;
    padding: 0 7px 2px;
    border: 1px solid ${c.line};
    border-radius: 4px;
    background: ${c.input};
  }
`;
const CheckLabel = styled.label`
  margin: 0 18px 0 4px;
  color: #fff;
  white-space: nowrap;
`;
const FilterRow = styled.div`
  display: grid;
  grid-template-columns: minmax(0, 1fr) 24px 24px;
  align-items: center;
  padding: 0 0 8px 8px;
`;
const FilterSearch = styled.div`
  margin-right: 8px;
`;
const IconButton = styled.button<{ $faded?: boolean; $w?: number }>`
  width: ${(p) => p.$w ?? 24}px;
  height: 22px;
  color: ${(p) => (p.$faded ? "#6b6b6b" : c.text)};
`;
const DetailsScroll = styled.div`
  flex: 1;
  min-height: 0;
  display: grid;
  grid-template-columns: minmax(0, 1fr) 16px;
  margin-bottom: 2px;
  overflow: hidden;
`;
const DetailsList = styled.div`
  min-height: 0;
  overflow: hidden;
  font-size: 11px;
`;
const Gutter = styled.div`
  background: ${c.well};
  padding: 2px 4px;
`;
const Thumb = styled.div`
  width: 8px;
  height: 322px;
  border-radius: 4px;
  background: #575757;
`;
const Section = styled.button`
  display: flex;
  justify-content: flex-start;
  gap: 7px;
  width: 100%;
  height: 27px;
  padding-left: 5px;
  background: ${c.header};
  border-bottom: 1px solid ${c.well};
  font-weight: 700;
  color: #c8c8c8;
`;
const Row = styled.div<{ $child?: boolean; $off?: boolean }>`
  display: grid;
  grid-template-columns: 183px minmax(0, 1fr) 44px;
  height: 27px;
  border-bottom: 1px solid ${c.well};
  background: ${(p) => (p.$child ? `linear-gradient(90deg, #232323 12px, #1b1b1b 16px, #282828 16px)` : c.panel)};
  color: ${(p) => (p.$off ? "#5e5e5e" : c.text)};
`;
const RowLabel = styled.div<{ $indent: number }>`
  display: flex;
  align-items: center;
  padding-left: ${(p) => p.$indent}px;
  border-right: 1px solid ${c.well};
  white-space: nowrap;
`;
const RowToggle = styled.span`
  width: 10px;
  margin-right: 7px;
  flex: none;
  display: grid;
  justify-items: center;
`;
const RowValue = styled.div`
  display: flex;
  align-items: center;
  padding-left: 12px;
  border-right: 1px solid ${c.well};
`;
const RowTail = styled.div`
  display: flex;
  align-items: center;
  justify-content: flex-end;
`;
const TailButton = styled.button`
  width: 20px;
  height: 20px;
`;
const ValueInput = styled.input<{ $w?: number; $bright?: boolean; $fill?: boolean }>`
  && {
    ${(p) => (p.$w ? `width: ${p.$w}px;` : "flex: 1; min-width: 0; margin-right: 2px;")}
    height: 20px;
    padding: 0 8px 2px;
    border: 1px solid ${c.line};
    border-radius: 4px;
    color: ${(p) => (p.$bright ? "#fff" : c.text)};
    background: ${(p) => (p.$fill ? `linear-gradient(90deg, ${c.line} 22px, ${c.input} 22px)` : c.input)};
  }
`;
const Segments = styled.div`
  display: flex;
  height: 23px;
  padding: 1px;
  border-radius: 4px;
  background: ${c.input};
  font-size: 13px;
`;
const Segment = styled.button<{ $w: number; $on?: boolean }>`
  width: ${(p) => p.$w}px;
  border-radius: 4px;
  background: ${(p) => (p.$on ? c.line : "transparent")};
  color: ${(p) => (p.$on ? "#fff" : c.text)};
`;
const FlagButton = styled.button`
  width: 30px;
  height: 20px;
`;
const BindButton = styled.button`
  width: 45px;
  height: 21px;
  margin-left: auto;
  padding-right: 4px;
  border: 1px solid #111;
  border-radius: 4px;
  background: ${c.line};
`;
const Swatch = styled.button`
  width: 105px;
  height: 21px;
  margin-right: 7px;
  border: 1px solid #ddd;
  border-radius: 4px;
  background: #fff;
`;
const InheritLabel = styled.label`
  margin-left: 2px;
  color: #fff;
`;
const PickIcons = styled.div`
  display: flex;
  padding-left: 3px;
`;

type PropRowProps = {
  label: string;
  child?: boolean;
  off?: boolean;
  bindable?: boolean;
  toggle?: "down" | "right";
  reset?: boolean;
  keyed?: boolean;
  children?: React.ReactNode;
};
const PropRow = ({ label, child, off, bindable, toggle, reset, keyed, children }: PropRowProps) => (
  <Row $child={child} $off={off}>
    <RowLabel $indent={child ? 38 : bindable ? 7 : 5}>
      {!child && <RowToggle>{toggle === "down" ? <TriDown /> : toggle === "right" ? <TriRight /> : null}</RowToggle>}
      {label}
    </RowLabel>
    <RowValue>{children}</RowValue>
    <RowTail>
      {reset && <TailButton aria-label={"Reset " + label}><ResetIcon /></TailButton>}
      {keyed && <TailButton aria-label={"Add key for " + label}><Diamond /></TailButton>}
    </RowTail>
  </Row>
);
const Advanced = styled.button`
  width: 100%;
  height: 27px;
  justify-content: flex-start;
  gap: 9px;
  padding-left: 7px;
  border-bottom: 1px solid ${c.well};
  background: ${c.panel};
`;
const Group = ({ title }: { title: string }) => (
  <Section><TriDown />{title}</Section>
);
const AssetIcons = ({ name }: { name: string }) => (
  <PickIcons>
    <IconButton $w={26} aria-label={"Use selected " + name}><UseIcon /></IconButton>
    <IconButton $w={26} aria-label={"Browse to " + name}><FindFile /></IconButton>
    <IconButton $w={26} aria-label={"New " + name}><PlusIcon /></IconButton>
    <IconButton $w={26} aria-label={"Clear " + name}><BigX /></IconButton>
  </PickIcons>
);

const DetailsPanel = () => (
  <Panel>
    <PanelTabs>
      <PanelTab $w={160} $active>
        <TabIcon><DetailsIcon /></TabIcon>
        <TabLabel>Details</TabLabel>
        <CloseButton aria-label="Close Details"><CloseX /></CloseButton>
      </PanelTab>
    </PanelTabs>
    <PanelBody>
      <NameRow>
        <TextIcon />
        <NameInput aria-label="Widget name" defaultValue="CommonTextBlock_0" />
        <Check id="is-variable" />
        <CheckLabel htmlFor="is-variable">Is Variable</CheckLabel>
        <DottedLink href="#open">Open CommonTextBlock</DottedLink>
      </NameRow>
      <FilterRow>
        <FilterSearch>
          <SearchBox>
            <Search />
            <input aria-label="Search details" placeholder="Search" />
          </SearchBox>
        </FilterSearch>
        <IconButton aria-label="Property matrix"><TableIcon /></IconButton>
        <IconButton aria-label="Details settings"><Gear /></IconButton>
      </FilterRow>
      <DetailsScroll>
        <DetailsList>
          <Group title="Slot (Scroll Box Slot)" />
          <PropRow label="Padding" toggle="down" reset keyed><ValueInput aria-label="Padding" defaultValue="0.0, 0.0, 0.0, 20.0" /></PropRow>
          <PropRow label="Left" child keyed><ValueInput $w={125} aria-label="Left" defaultValue="0.0" /></PropRow>
          <PropRow label="Top" child keyed><ValueInput $w={125} aria-label="Top" defaultValue="0.0" /></PropRow>
          <PropRow label="Right" child keyed><ValueInput $w={125} aria-label="Right" defaultValue="0.0" /></PropRow>
          <PropRow label="Bottom" child reset keyed><ValueInput $w={125} aria-label="Bottom" defaultValue="20.0" /></PropRow>
          <PropRow label="Size">
            <Segments><Segment $w={45} $on>Auto</Segment><Segment $w={41}>Fill</Segment></Segments>
          </PropRow>
          <PropRow label="Horizontal Alignment" keyed>
            <Segments>
              {["Left", "Center", "Right", "Fill"].map((n, i) => (
                <Segment key={n} $w={i === 3 ? 32 : 33} $on={i === 3} aria-label={"Horizontal " + n}><AlignIcon kind={i} /></Segment>
              ))}
            </Segments>
          </PropRow>
          <PropRow label="Vertical Alignment" keyed>
            <Segments>
              {["Top", "Center", "Bottom", "Fill"].map((n, i) => (
                <Segment key={n} $w={i === 3 ? 32 : 33} $on={i === 3} aria-label={"Vertical " + n}><AlignIcon kind={i} turn /></Segment>
              ))}
            </Segments>
          </PropRow>
          <Group title="Content" />
          <PropRow label="Text" bindable reset>
            <ValueInput $w={136} aria-label="Text" defaultValue="Option Category" />
            <FlagButton aria-label="Localization"><FlagIcon /></FlagButton>
            <BindButton aria-label="Bind text"><LinkIcon /></BindButton>
          </PropRow>
          <Group title="Mobile" />
          <PropRow label="Mobile Font Size Multiplier" keyed><ValueInput $w={125} $bright $fill aria-label="Mobile Font Size Multiplier" defaultValue="1.0" /></PropRow>
          <Group title="Accessibility" />
          <PropRow label="Override Accessible Defaults"><Check label="Override Accessible Defaults" /></PropRow>
          <PropRow label="Can Children be Accessible" off><Check label="Can Children be Accessible" off /></PropRow>
          <PropRow label="Accessible Behavior" off><Pick label="Accessible Behavior" value="Auto" w={59} off /></PropRow>
          <Advanced><TriRight />Advanced</Advanced>
          <Group title="Common Text" />
          <PropRow label="Is Scrolling Enabled"><Check label="Is Scrolling Enabled" on /></PropRow>
          <PropRow label="Auto Collapse with Empty Text"><Check label="Auto Collapse with Empty Text" /></PropRow>
          <PropRow label="Style" reset keyed><Pick label="Style" value="CommonTextS" w={110} /><AssetIcons name="Style" /></PropRow>
          <PropRow label="Scroll Style"><Pick label="Scroll Style" value="None" w={95} /><AssetIcons name="Scroll Style" /></PropRow>
          <Group title="Appearance" />
          <PropRow label="Color and Opacity" bindable toggle="right" keyed>
            <Swatch aria-label="Color" />
            <Check id="inherit" />
            <InheritLabel htmlFor="inherit">Inherit</InheritLabel>
            <BindButton aria-label="Bind color"><LinkIcon /></BindButton>
          </PropRow>
          <PropRow label="Min Desired Width" keyed><ValueInput $w={125} $bright aria-label="Min Desired Width" defaultValue="0.0" /></PropRow>
          <PropRow label="Font" toggle="down" reset />
          <PropRow label="Font Family" child reset>
            <Pick label="Font Family" value="Yangjin_Font" w={140} off />
            <PickIcons>
              <IconButton $w={26} $faded aria-label="Use selected font"><UseIcon /></IconButton>
              <IconButton $w={26} aria-label="Browse to font"><FindFile /></IconButton>
            </PickIcons>
          </PropRow>
          <PropRow label="Typeface" child reset><Pick label="Typeface" value="Default" w={125} off /></PropRow>
          <Row $child><RowLabel $indent={38} /><RowValue /><RowTail /></Row>
        </DetailsList>
        <Gutter><Thumb /></Gutter>
      </DetailsScroll>
    </PanelBody>
  </Panel>
);

/* ---------- status bar ---------- */

const StatusBar = styled.footer`
  display: flex;
  height: 32px;
  background: ${c.panel};
`;
const StatusCell = styled.div<{ $pad: string }>`
  display: flex;
  align-items: center;
  padding: ${(p) => p.$pad};
  border-right: 2px solid ${c.recess};
  &:last-child { border-right: 0; }
`;
const StatusSpacer = styled.div`
  flex: 1;
  border-right: 2px solid ${c.recess};
`;
const StatusButton = styled.button`
  gap: 4px;
`;
const Trail = styled.span`
  padding-left: 3px;
`;
const ConsoleInput = styled.input`
  && {
    width: 300px;
    height: 22px;
    margin-left: 10px;
    padding: 0 8px 2px;
    border: 1px solid ${c.line};
    border-radius: 4px;
    background: ${c.input};
    font: 12px/16px "DejaVu Sans Mono", monospace;
  }
  &::placeholder { color: #555; opacity: 1; }
`;

export default function App() {
  return (
    <Window>
      <Global />
      <Frame>
        <TitleBar>
          <LogoSlot><Logo /></LogoSlot>
          <TitleMain>
            <MenuBar>
              {["File", "Edit", "Asset", "View", "Debug", "Window", "Tools", "Help"].map((m) => <MenuItem key={m}>{m}</MenuItem>)}
            </MenuBar>
            <DocTabs>
              <DocTab><LevelIcon /><TabLabel>MainMenu</TabLabel></DocTab>
              <DocTab $active>
                <WidgetBp color="#2a5bbf" heart="#1f3a78" />
                <TabLabel>WBP_AudioOptions*</TabLabel>
                <CloseButton aria-label="Close tab"><CloseX /></CloseButton>
              </DocTab>
              <DocTab><WidgetBp color="#24478f" heart="#1c2f5c" /><TabLabel>WBP_MainMenu</TabLabel></DocTab>
            </DocTabs>
          </TitleMain>
          <TitleSide>
            <WindowButtons>
              <WindowButton aria-label="Minimize"><Svg w={10}><path d="M0 5.500h10" stroke="currentColor" /></Svg></WindowButton>
              <WindowButton aria-label="Maximize"><Svg w={10}><rect x=".5" y=".5" width="9" height="9" fill="none" stroke="currentColor" /></Svg></WindowButton>
              <WindowButton aria-label="Close"><Svg w={12}><path d="M1 1l10 10M11 1 1 11" stroke="currentColor" strokeWidth="1.300" /></Svg></WindowButton>
            </WindowButtons>
            <ParentClass>Parent class: <DottedLink href="#class">User Widget</DottedLink></ParentClass>
          </TitleSide>
        </TitleBar>

        <ToolBar>
          <ToolGroup $w={98} $pad={17} $gap={25}>
            <ToolButton aria-label="Save"><SaveIcon /></ToolButton>
            <ToolButton aria-label="Browse"><BrowseIcon /></ToolButton>
          </ToolGroup>
          <ToolGroup $w={121} $pad={19} $gap={11}>
            <ToolButton><CompileIcon />Compile</ToolButton>
            <ToolButton aria-label="Compile options"><Dots /></ToolButton>
          </ToolGroup>
          <ToolGroup $w={85} $pad={12}>
            <ToolButton><DiffIcon />Diff<Chevron /></ToolButton>
          </ToolGroup>
          <ToolGroup $w={173} $pad={18}>
            <PlayGroup>
              <PlayButton aria-label="Play" $color={c.green}><Svg w={16} h={18}><path d="M0 1v16l16-8z" /></Svg></PlayButton>
              <PlayButton aria-label="Step"><Svg w={16}><path d="M1 1h3v15H1zM7 1v15l8-7z" /></Svg></PlayButton>
              <PlayButton aria-label="Stop"><Svg w={14} h={15}><path d="M0 0h14v15H0z" /></Svg></PlayButton>
              <PlayButton aria-label="Eject" $color={c.text}><Svg w={19} h={18}><path d="M4 0v12l12-6z" /><path d="M3 13h10l3-2 3 6H0z" fill="#808080" /></Svg></PlayButton>
              <PlayMore aria-label="Play options"><Dots /></PlayMore>
            </PlayGroup>
          </ToolGroup>
          <ToolGroup $w={233} $pad={16} $gap={8}>
            <Pick label="Debug object" value="No debug object selected" w={179} tall />
            <ToolButton $faded aria-label="Browse to object"><FindFile /></ToolButton>
          </ToolGroup>
          <ToolGroup $pad={15}>
            <ToolButton><ReflectorIcon />Widget Reflector</ToolButton>
          </ToolGroup>
          <ModeSwitch>
            <ModeButton $active><DesignerIcon />Designer</ModeButton>
            <ModeButton><GraphIcon />Graph</ModeButton>
          </ModeSwitch>
        </ToolBar>

        <Main>
          <LeftColumn>
            <PalettePanel />
            <HierarchyPanel />
          </LeftColumn>
          <DesignerPanel />
          <DetailsPanel />
        </Main>

        <StatusBar>
          <StatusCell $pad="0 11px 0 10px"><StatusButton><BrowseIcon w={17} />Content Drawer</StatusButton></StatusCell>
          <StatusCell $pad="0 8px 0 9px"><StatusButton><ClapIcon />Animations</StatusButton></StatusCell>
          <StatusCell $pad="0 8px 0 10px"><StatusButton><LogIcon />Output Log</StatusButton></StatusCell>
          <StatusCell $pad="0 9px 0 13px">
            <StatusButton><CmdIcon />Cmd<Trail><Chevron /></Trail></StatusButton>
            <ConsoleInput aria-label="Console command" placeholder="Enter Console Command" />
          </StatusCell>
          <StatusSpacer />
          <StatusCell $pad="0 13px 0 12px"><StatusButton><UnsavedIcon />1 Unsaved</StatusButton></StatusCell>
          <StatusCell $pad="0 20px 0 14px"><StatusButton><BranchIcon />Revision Control<Chevron /></StatusButton></StatusCell>
        </StatusBar>
      </Frame>
    </Window>
  );
}
